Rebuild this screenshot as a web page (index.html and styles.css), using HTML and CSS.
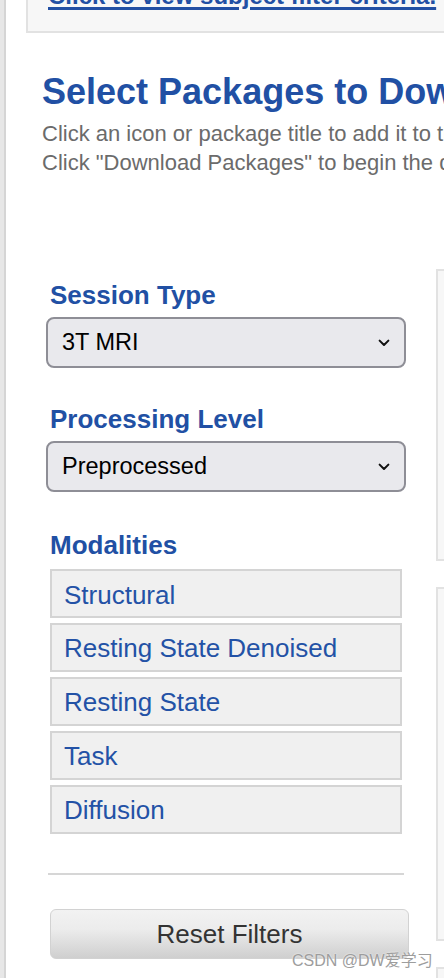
FILE: index.html
```html
<!DOCTYPE html>
<html lang="en">
<head>
<meta charset="utf-8">
<title>Select Packages to Download</title>
<link rel="stylesheet" href="styles.css">
</head>
<body>
<div class="frame">
  <div class="topbar">
    <a class="topbar-link" href="#">Click to view subject filter criteria.</a>
  </div>

  <div class="intro">
    <h1 class="title">Select Packages to Download</h1>
    <p class="sub">Click an icon or package title to add it to the download queue.<br>Click "Download Packages" to begin the download process.</p>
  </div>

  <div class="main">
    <aside class="sidebar">
      <div class="label">Session Type</div>
      <div class="select">
        <span class="select-text">3T MRI</span>
        <svg class="chev" width="12" height="8" viewBox="0 0 12 8"><path d="M1.6 1.6 L6 6 L10.4 1.6" fill="none" stroke="#111" stroke-width="2" stroke-linecap="round" stroke-linejoin="round"/></svg>
      </div>

      <div class="label label-2">Processing Level</div>
      <div class="select">
        <span class="select-text">Preprocessed</span>
        <svg class="chev" width="12" height="8" viewBox="0 0 12 8"><path d="M1.6 1.6 L6 6 L10.4 1.6" fill="none" stroke="#111" stroke-width="2" stroke-linecap="round" stroke-linejoin="round"/></svg>
      </div>

      <div class="label label-3">Modalities</div>
      <ul class="mods">
        <li class="mod">Structural</li>
        <li class="mod">Resting State Denoised</li>
        <li class="mod">Resting State</li>
        <li class="mod">Task</li>
        <li class="mod">Diffusion</li>
      </ul>

      <div class="rule"></div>

      <button class="reset" type="button">Reset Filters</button>
    </aside>

    <section class="packages">
      <div class="pkg pkg-1"></div>
      <div class="pkg pkg-2"></div>
      <div class="pkg pkg-3"></div>
    </section>
  </div>

  <div class="watermark">CSDN @DW爱学习</div>
</div>
</body>
</html>
```

FILE: styles.css
```css
html, body {
  margin: 0;
  padding: 0;
}
body {
  background: #e7e7e7;
  overflow: hidden;
  font-family: "Liberation Sans", Arial, sans-serif;
  height: 978px;
}
.frame {
  position: relative;
  display: flow-root;
  margin-left: 4px;
  border-left: 2px solid #d5d5d5;
  background: #ffffff;
  height: 978px;
  overflow: hidden;
}

/* top collapsed filter box */
.topbar {
  margin-top: -18px;
  margin-left: 20px;
  padding: 0 0 21px 20px;
  background: #f7f7f7;
  border-left: 2px solid #e2e2e2;
  border-bottom: 2px solid #e2e2e2;
  white-space: nowrap;
  overflow: hidden;
}
.topbar-link {
  display: block;
  font-size: 24px;
  line-height: 28px;
  font-weight: bold;
  color: #2250a4;
  text-decoration: underline;
  text-decoration-thickness: 2.6px;
  text-underline-offset: 3px;
}

/* intro */
.intro {
  margin-left: 36px;
  white-space: nowrap;
}
.title {
  margin: 38px 0 0;
  font-size: 36px;
  line-height: 42px;
  font-weight: bold;
  color: #2150a4;
}
.sub {
  margin: 6px 0 0;
  font-size: 22px;
  line-height: 29px;
  color: #6b6b6b;
}

/* main two-column area */
.main {
  display: flex;
  margin-top: 92px;
  margin-left: 40px;
  gap: 26px;
}
.sidebar {
  flex: 0 0 364px;
  display: flex;
  flex-direction: column;
  align-items: flex-start;
  padding-top: 11px;
}
.label {
  margin-left: 4px;
  font-size: 26px;
  line-height: 30px;
  font-weight: bold;
  color: #2150a4;
}
.label-2 { margin-top: 36px; }
.label-3 { margin-top: 38px; }

.select {
  box-sizing: border-box;
  margin-top: 7px;
  width: 360px;
  height: 51px;
  display: flex;
  align-items: center;
  justify-content: space-between;
  padding: 0 14px 0 14px;
  background: #e9e9ed;
  border: 2px solid #8e8e96;
  border-radius: 8px;
}
.select-text {
  font-size: 23.5px;
  color: #000;
}
.chev {
  display: block;
}

.mods {
  list-style: none;
  margin: 9px 0 0 4px;
  padding: 0;
  display: flex;
  flex-direction: column;
  gap: 4.6px;
}
.mod {
  box-sizing: border-box;
  width: 352px;
  height: 49.4px;
  padding: 8.5px 12px 0;
  background: #f0f0f0;
  border: 2px solid #d4d4d4;
  font-size: 26px;
  line-height: 30px;
  color: #2352a6;
}

.rule {
  margin: 39px 0 0 2px;
  width: 356px;
  height: 2px;
  background: #d6d6d6;
}

.reset {
  box-sizing: border-box;
  margin: 34px 0 0 4px;
  width: 359px;
  height: 50px;
  display: flex;
  align-items: center;
  justify-content: center;
  padding: 0;
  border: 1.5px solid #d2d2d2;
  border-radius: 6px;
  background: linear-gradient(#f2f2f2, #ececec 40%, #cfcfcf);
  font-family: "Liberation Sans", Arial, sans-serif;
  font-size: 26px;
  line-height: 30px;
  color: #333333;
}

/* right column package boxes */
.packages {
  flex: 0 0 400px;
  display: flex;
  flex-direction: column;
  gap: 26px;
}
.pkg {
  box-sizing: border-box;
  background: #f7f7f7;
  border-top: 2px solid #e2e2e2;
  border-left: 2px solid #e2e2e2;
  border-bottom: 2px solid #e2e2e2;
}
.pkg-1 { height: 292px; }
.pkg-2 { height: 354px; }
.pkg-3 { height: 12px; border-bottom: 0; }

.watermark {
  position: absolute;
  left: 286px;
  top: 952px;
  font-family: "Liberation Sans", "Noto Sans CJK SC", sans-serif;
  font-size: 16px;
  line-height: 18px;
  color: #9d9d9d;
  white-space: nowrap;
  text-shadow: 0 0 2px #ffffff;
}
```
